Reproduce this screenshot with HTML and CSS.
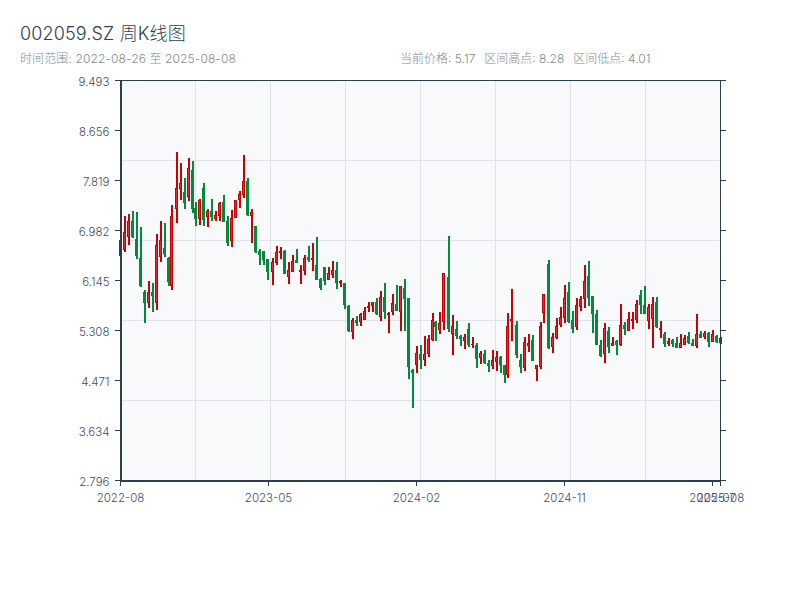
FILE: index.html
```html
<!DOCTYPE html>
<html lang="zh-CN">
<head>
<meta charset="utf-8">
<title>002059.SZ 周K线图</title>
<link rel="stylesheet" href="styles.css">
</head>
<body>
<header class="header">
  <h1 class="title">002059.SZ 周K线图</h1>
  <div class="meta">
    <span class="range">时间范围: 2022-08-26 至 2025-08-08</span>
    <span class="stats"><span>当前价格: 5.17</span><span>区间高点: 8.28</span><span>区间低点: 4.01</span></span>
  </div>
</header>
<svg class="chart" width="800" height="530" viewBox="0 0 800 530" xmlns="http://www.w3.org/2000/svg">
  <rect class="plot" x="121" y="81" width="600" height="400"/>
  <g class="grid">
    <line x1="195.5" x2="195.5" y1="81" y2="481"/>
    <line x1="270.5" x2="270.5" y1="81" y2="481"/>
    <line x1="345.5" x2="345.5" y1="81" y2="481"/>
    <line x1="420.5" x2="420.5" y1="81" y2="481"/>
    <line x1="495.5" x2="495.5" y1="81" y2="481"/>
    <line x1="570.5" x2="570.5" y1="81" y2="481"/>
    <line x1="645.5" x2="645.5" y1="81" y2="481"/>
    <line x1="121" x2="721" y1="160.5" y2="160.5"/>
    <line x1="121" x2="721" y1="240.5" y2="240.5"/>
    <line x1="121" x2="721" y1="320.5" y2="320.5"/>
    <line x1="121" x2="721" y1="400.5" y2="400.5"/>
  </g>
  <g id="candles"></g>
  <g class="axis">
    <line x1="115" x2="726" y1="80.5" y2="80.5"/>
    <line class="thick" x1="121" x2="121" y1="80" y2="482"/>
    <line x1="720.5" x2="720.5" y1="80" y2="486"/>
    <line class="thick" x1="120" x2="721" y1="481" y2="481"/>
    <line x1="115" x2="120" y1="130.5" y2="130.5"/>
    <line x1="115" x2="120" y1="180.5" y2="180.5"/>
    <line x1="115" x2="120" y1="230.5" y2="230.5"/>
    <line x1="115" x2="120" y1="280.5" y2="280.5"/>
    <line x1="115" x2="120" y1="330.5" y2="330.5"/>
    <line x1="115" x2="120" y1="380.5" y2="380.5"/>
    <line x1="115" x2="120" y1="430.5" y2="430.5"/>
    <line x1="115" x2="120" y1="480.5" y2="480.5"/>
    <line x1="721" x2="726" y1="130.5" y2="130.5"/>
    <line x1="721" x2="726" y1="180.5" y2="180.5"/>
    <line x1="721" x2="726" y1="230.5" y2="230.5"/>
    <line x1="721" x2="726" y1="280.5" y2="280.5"/>
    <line x1="721" x2="726" y1="330.5" y2="330.5"/>
    <line x1="721" x2="726" y1="380.5" y2="380.5"/>
    <line x1="721" x2="726" y1="430.5" y2="430.5"/>
    <line x1="721" x2="726" y1="480.5" y2="480.5"/>
    <line x1="120.5" x2="120.5" y1="482" y2="486"/>
    <line x1="268.5" x2="268.5" y1="482" y2="486"/>
    <line x1="416.5" x2="416.5" y1="482" y2="486"/>
    <line x1="564.5" x2="564.5" y1="482" y2="486"/>
    <line x1="712.5" x2="712.5" y1="482" y2="486"/>
  </g>
  <g class="labels-y">
    <text x="109.5" y="86">9.493</text>
    <text x="109.5" y="136">8.656</text>
    <text x="109.5" y="186">7.819</text>
    <text x="109.5" y="236">6.982</text>
    <text x="109.5" y="286">6.145</text>
    <text x="109.5" y="336">5.308</text>
    <text x="109.5" y="386">4.471</text>
    <text x="109.5" y="436">3.634</text>
    <text x="109.5" y="486">2.796</text>
  </g>
  <g class="labels-x">
    <text x="120.5" y="502">2022-08</text>
    <text x="268.5" y="502">2023-05</text>
    <text x="416.5" y="502">2024-02</text>
    <text x="564.5" y="502">2024-11</text>
    <text x="712.5" y="502">2025-07</text>
    <text x="720.5" y="502">2025-08</text>
  </g>
</svg>
<script src="chart.js"></script>
</body>
</html>
```
FILE: styles.css
```css
html, body {
  margin: 0;
  padding: 0;
  background: #ffffff;
}
body {
  width: 800px;
  height: 600px;
  overflow: hidden;
  font-family: Inter, "Noto Sans CJK SC", sans-serif;
  font-weight: 300;
}
.header {
  padding: 22px 20px 0;
  height: 49px;
  box-sizing: content-box;
}
.title {
  margin: 0;
  font-size: 18px;
  font-weight: 300;
  line-height: 24px;
  letter-spacing: 0.15px;
  color: #2c3e50;
}
.meta {
  display: grid;
  grid-template-columns: 1fr 1fr;
  margin-top: 5px;
  font-size: 12px;
  line-height: 16px;
  color: #7f8c8d;
}
.range {
  letter-spacing: 0.12px;
}
.stats {
  display: flex;
  gap: 9px;
}
.chart {
  display: block;
  margin-top: -71px;
}
.plot {
  fill: #f8f9fa;
}
.grid line {
  stroke: #e0e3e8;
  stroke-width: 1;
}
.axis line {
  stroke: #2c3e50;
  stroke-width: 1;
  shape-rendering: crispEdges;
}
.axis .thick {
  stroke-width: 2;
}
.labels-y text,
.labels-x text {
  font-size: 11.5px;
  fill: #3f4c5b;
}
.labels-y text {
  text-anchor: end;
}
.labels-x text {
  text-anchor: middle;
}
#candles rect {
  shape-rendering: crispEdges;
}
.up {
  fill: #cc0000;
}
.up-core {
  fill: #f02328;
}
.down {
  fill: #008a3a;
}
```
FILE: chart.js
```js
// Weekly candles, traced from chart coordinates: [x, high, low, bodyTop, bodyBottom, colour].
// Each segment is measured at 3x from its own origin.
var segments = [
  { x0: 110, y0: 140, rows: [
    [33,300,347,300,347,'r'],[44,228,335,277,330,'r'],[56,222,314,243,290,'r'],[68,213,294,243,291,'g'],
    [80,216,356,298,348,'g'],[92,261,440,355,438,'g'],[104,450,548,456,488,'g'],[116,423,503,456,490,'r'],
    [128,429,515,456,468,'g'],[140,282,509,315,488,'r'],[152,243,365,300,350,'r'],[164,249,350,325,342,'g'],
    [176,351,438,353,426,'g'],[187,195,449,228,437,'r'],[200,36,248,144,206,'r'],[212,69,180,129,147,'r'],
    [224,114,207,156,189,'g'],[236,54,183,85,170,'r'],[248,63,219,90,207,'g'],[259,186,258,204,237,'g'],
    [271,177,255,180,237,'r'],[283,129,258,144,240,'g'],[295,207,261,213,231,'r'],[307,177,243,213,231,'g'],
    [319,213,243,225,237,'r'],[331,186,243,189,228,'r'],[343,165,246,186,246,'g'],[355,228,318,243,309,'g'],
    [367,210,321,234,303,'r'],[379,180,234,180,234,'r'],[391,153,204,162,180,'r'],[403,45,174,123,165,'r'],
    [415,114,228,123,225,'g'],[427,207,309,216,228,'r'],[439,258,339,258,336,'g'],[451,327,375,333,345,'g'],
    [463,333,375,333,360,'g'],[475,357,420,357,396,'g']
  ]},
  { x0: 270, y0: 200, rows: [
    [9,174,255,186,215,'r'],[20,138,195,156,189,'r'],[32,141,177,153,159,'r'],[44,150,222,153,222,'g'],
    [56,186,252,210,231,'r'],[68,165,216,183,216,'r'],[80,147,189,180,189,'g'],[92,195,252,210,216,'r'],
    [104,165,225,174,213,'r'],[116,138,186,171,180,'g'],[128,129,213,174,180,'r'],[140,111,240,195,240,'g'],
    [152,234,270,237,264,'g'],[164,201,255,201,243,'g'],[176,201,240,219,240,'r'],[188,183,234,210,225,'r'],
    [200,186,267,210,249,'g'],[212,240,261,243,249,'r'],[224,249,327,249,315,'g'],[236,315,396,318,393,'g'],
    [248,354,417,360,396,'r'],[260,348,378,360,369,'g'],[272,339,378,342,366,'r'],[284,321,360,333,360,'r'],
    [296,306,336,318,324,'r'],[308,306,336,306,318,'r'],[320,294,345,306,342,'g'],[332,273,363,291,351,'r'],
    [344,249,357,291,336,'g'],[356,336,399,339,345,'r'],[368,282,345,309,336,'r'],[380,255,333,312,333,'g'],
    [392,258,393,258,336,'r'],[404,237,393,264,297,'g'],[416,294,537,294,501,'g'],[429,507,624,510,519,'g'],
    [440,438,519,459,495,'r'],[452,435,507,462,480,'g'],[464,408,498,462,480,'r'],[476,405,471,417,462,'r'],
    [488,339,423,360,420,'r'],[497,363,423,366,381,'g']
  ]},
  { x0: 430, y0: 220, rows: [
    [31,276,342,309,330,'r'],[43,159,330,159,306,'r'],[56,48,336,171,327,'g'],[68,285,405,318,342,'r'],
    [80,303,357,327,348,'g'],[92,345,378,348,357,'g'],[104,342,387,351,363,'r'],[116,309,381,327,375,'g'],
    [128,351,384,372,375,'r'],[140,369,444,375,417,'g'],[152,393,432,399,414,'r'],[164,390,432,402,429,'g'],
    [176,420,456,429,438,'g'],[188,390,447,420,438,'r'],[200,393,453,411,426,'r'],[212,408,459,411,435,'g'],
    [224,435,489,435,465,'g'],[233,279,474,318,465,'r'],[247,207,363,297,303,'r'],[260,303,414,315,405,'g'],
    [272,402,459,420,441,'g'],[284,351,453,366,444,'r'],[296,342,396,369,378,'r'],[308,345,423,360,423,'g'],
    [320,435,483,435,447,'r'],[332,306,447,318,441,'r'],[343,222,309,222,279,'r'],[356,120,387,132,384,'g'],
    [368,339,399,351,381,'r'],[380,294,357,318,354,'r'],[392,261,321,291,315,'r'],[404,195,309,234,294,'r'],
    [416,186,309,216,306,'g']
  ]},
  { x0: 570, y0: 250, rows: [
    [8,183,249,210,237,'g'],[20,144,240,165,231,'r'],[32,138,183,147,171,'r'],[44,45,174,93,147,'r'],
    [56,33,168,78,144,'g'],[68,138,249,138,192,'g'],[80,180,285,192,285,'g'],[92,270,321,285,318,'g'],
    [104,219,339,234,312,'r'],[116,231,309,243,291,'g'],[128,261,288,279,288,'r'],[140,270,315,273,285,'g'],
    [152,162,288,225,285,'r'],[164,216,255,225,237,'g'],[176,186,243,207,243,'r'],[188,186,237,207,213,'r'],
    [200,150,219,162,210,'r'],[212,120,192,135,165,'g'],[224,108,192,165,192,'g'],[236,162,237,171,213,'r'],
    [248,141,294,162,207,'r'],[260,141,234,156,231,'g'],[272,213,264,234,240,'r'],[284,246,291,252,282,'g'],
    [296,264,288,273,282,'r'],[308,267,291,270,282,'g'],[320,261,294,279,294,'g'],[332,252,294,279,294,'r'],
    [344,255,285,264,285,'r'],[356,246,282,258,279,'g'],[368,267,288,279,288,'g'],[380,192,294,252,288,'r'],
    [392,243,264,252,264,'g'],[404,243,267,249,261,'r'],[416,246,291,249,276,'g'],[428,240,276,252,276,'r'],
    [440,255,279,258,276,'g'],[452,261,282,264,279,'r']
  ]}
];

function rect(cls, x, y, w, h) {
  return '<rect class="' + cls + '" x="' + x + '" y="' + y + '" width="' + w + '" height="' + Math.max(h, 1) + '"/>';
}

var out = '';
segments.forEach(function (seg) {
  seg.rows.forEach(function (r) {
    var x = Math.round(seg.x0 + r[0] / 3);
    var hi = Math.round(seg.y0 + r[1] / 3), lo = Math.round(seg.y0 + r[2] / 3);
    var top = Math.round(seg.y0 + r[3] / 3), bot = Math.round(seg.y0 + r[4] / 3);
    var cls = r[5] === 'r' ? 'up' : 'down';
    out += rect(cls, x - 1, hi, 2, lo - hi);
    out += rect(cls, x - 2, top, 3, bot - top);
    if (r[5] === 'r' && bot - top > 2) {
      out += rect('up-core', x - 1, top + 1, 1, bot - top - 2);
    }
  });
});
document.getElementById('candles').innerHTML = out;
```
